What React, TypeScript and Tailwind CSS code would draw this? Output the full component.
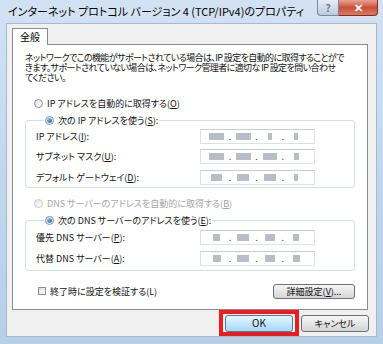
import { Fragment } from 'react';

const jp = "font-['Noto_Sans_CJK_JP',sans-serif] [font-feature-settings:'palt']";

function Key({ k }: { k: string }) {
    return <span className="underline underline-offset-1">{k}</span>;
}

function Radio({ checked, disabled }: { checked?: boolean; disabled?: boolean }) {
    return (
        <span
            className={`flex h-[9px] w-[9px] shrink-0 items-center justify-center rounded-full border bg-linear-to-br from-[#e4e4e4] to-white ${
                disabled ? 'border-[#c8c8c8]' : 'border-[#8a8f98]'
            }`}
        >
            {checked && <span className="h-[5px] w-[5px] rounded-full bg-linear-to-br from-[#8ed0f5] to-[#1e63b8]" />}
        </span>
    );
}

// blurred octets, like the screenshot
function IpField({ blocks }: { blocks: string[] }) {
    return (
        <div className="flex h-[15px] w-[115px] items-center border border-[#dde2e8] border-t-[#c7ccd4] bg-white pl-[4px] pr-[6px]">
            {blocks.map((b, i) => (
                <Fragment key={i}>
                    <div className="flex flex-1 justify-center">
                        <span className={`h-[7px] bg-[#b9bdc4] blur-[0.7px] ${b}`} />
                    </div>
                    {i < 3 && <span className="text-[9px] leading-none text-[#444]">.</span>}
                </Fragment>
            ))}
        </div>
    );
}

function Row({ label, blocks }: { label: React.ReactNode; blocks: string[] }) {
    return (
        <div className="flex h-[15px] items-center">
            <div className="w-[164px] whitespace-nowrap text-[9px] leading-none text-[#111]">{label}</div>
            <IpField blocks={blocks} />
        </div>
    );
}

export default function App() {
    return (
        <div className={`flex h-[344px] w-[383px] flex-col bg-linear-to-b from-[#d3e2f3] via-[#c2d7ee] to-[#b8cfe8] ${jp}`}>
            {/* title bar */}
            <div className="flex h-[23px] items-start justify-between">
                <div className="whitespace-nowrap pl-[8px] pt-[5px] text-[11px] leading-[13px] text-black">
                    インターネット プロトコル バージョン 4 (TCP/IPv4)のプロパティ
                </div>
                <div className="mr-[5px] flex">
                    <div className="flex h-[16px] w-[22px] items-center justify-center rounded-bl-[4px] border border-t-0 border-[#7388a3] bg-linear-to-b from-[#e6edf6] to-[#bccbdd] text-[10px] font-bold leading-none text-[#6f7b8c]">
                        ?
                    </div>
                    <div className="flex h-[16px] w-[39px] items-center justify-center rounded-br-[4px] border border-t-0 border-l-0 border-[#8a2a1e] bg-linear-to-b from-[#e8a393] via-[#c9503b] to-[#d77c62] text-[11px] font-bold leading-none text-white">
                        ✕
                    </div>
                </div>
            </div>

            {/* client area */}
            <div className="mx-[6px] flex h-[314px] flex-col border border-[#a6b9cf] bg-[#f0f0f0] pl-[5px] pr-[7px]">
                <div className="mt-[4px] flex">
                    <div className="relative z-10 -mb-px flex h-[17px] w-[36px] items-center justify-center border border-b-0 border-[#898c95] bg-white text-[10px] leading-none text-black">
                        全般
                    </div>
                </div>
                <div className="mr-[1px] flex h-[266px] flex-col border border-[#898c95] bg-white px-[12px] pt-[8px]">
                    <div className="flex flex-col whitespace-nowrap text-[9px] leading-[10px] tracking-[-0.6px] text-[#111]">
                        <span>ネットワークでこの機能がサポートされている場合は、IP 設定を自動的に取得することがで</span>
                        <span>きます。サポートされていない場合は、ネットワーク管理者に適切な IP 設定を問い合わせ</span>
                        <span>てください。</span>
                    </div>

                    <div className="mt-[13.5px] flex h-[14px] items-center gap-[4px] pl-[9px] text-[9px] leading-none text-[#111]">
                        <Radio />
                        <span>
                            IP アドレスを自動的に取得する(<Key k="O" />)
                        </span>
                    </div>

                    <fieldset className="mt-[3px] rounded-[3px] border border-[#d5dfe5] pb-[2px] pl-[10px]">
                        <legend className="ml-[8px] flex h-[14px] items-center gap-[4px] px-[1px] text-[9px] leading-none text-[#111]">
                            <Radio checked />
                            <span>
                                次の IP アドレスを使う(<Key k="S" />):
                            </span>
                        </legend>
                        <div className="mt-[1px] flex flex-col gap-[5.5px]">
                            <Row label={<>IP アドレス(<Key k="I" />):</>} blocks={['w-[15px]', 'w-[15px]', 'w-[4px]', 'w-[4px]']} />
                            <Row label={<>サブネット マスク(<Key k="U" />):</>} blocks={['w-[15px]', 'w-[15px]', 'w-[14px]', 'w-[5px]']} />
                            <Row label={<>デフォルト ゲートウェイ(<Key k="D" />):</>} blocks={['w-[11px]', 'w-[12px]', 'w-[12px]', 'w-[4px]']} />
                        </div>
                    </fieldset>

                    <div className="mt-[9px] flex h-[14px] items-center gap-[4px] pl-[9px] text-[9px] leading-none text-[#a3a3a3]">
                        <Radio disabled />
                        <span>
                            DNS サーバーのアドレスを自動的に取得する(<Key k="B" />)
                        </span>
                    </div>

                    <fieldset className="mt-[3px] rounded-[3px] border border-[#d5dfe5] pb-[4px] pl-[10px]">
                        <legend className="ml-[8px] flex h-[14px] items-center gap-[4px] px-[1px] text-[9px] leading-none text-[#111]">
                            <Radio checked />
                            <span>
                                次の DNS サーバーのアドレスを使う(<Key k="E" />):
                            </span>
                        </legend>
                        <div className="mt-[2px] flex flex-col gap-[6px]">
                            <Row label={<>優先 DNS サーバー(<Key k="P" />):</>} blocks={['w-[7px]', 'w-[12px]', 'w-[10px]', 'w-[6px]']} />
                            <Row label={<>代替 DNS サーバー(<Key k="A" />):</>} blocks={['w-[8px]', 'w-[12px]', 'w-[10px]', 'w-[7px]']} />
                        </div>
                    </fieldset>

                    <div className="mt-[13px] flex h-[15px] items-center justify-between">
                        <div className="flex items-center gap-[4px] pl-[13px] text-[9px] leading-none text-[#111]">
                            <span className="h-[8px] w-[8px] border border-[#8a8f98] bg-linear-to-br from-[#dcdcdc] to-white" />
                            <span>終了時に設定を検証する(L)</span>
                        </div>
                        <div className="flex h-[15px] w-[82px] items-center justify-center rounded-[3px] border border-[#707070] bg-linear-to-b from-[#f6f6f6] via-[#e6e6e6] to-[#d4d4d4] text-[9px] leading-none text-[#111]">
                            詳細設定(<Key k="V" />)...
                        </div>
                    </div>
                </div>

                <div className="flex flex-1 items-stretch justify-end gap-[2px]">
                    <div className="flex items-center border-4 border-[#ee1c1c] px-[2px]">
                        <div className="flex h-[17px] w-[68px] items-center justify-center rounded-[3px] border border-[#3c7fb1] bg-linear-to-b from-[#eef7fd] via-[#c4e7fb] to-[#a9d8f3] text-[10px] leading-none text-[#111]">
                            OK
                        </div>
                    </div>
                    <div className="flex items-center">
                        <div className="flex h-[17px] w-[68px] items-center justify-center rounded-[3px] border border-[#707070] bg-linear-to-b from-[#f6f6f6] via-[#e6e6e6] to-[#d4d4d4] text-[9px] leading-none text-[#111]">
                            キャンセル
                        </div>
                    </div>
                </div>
            </div>
        </div>
    );
}
